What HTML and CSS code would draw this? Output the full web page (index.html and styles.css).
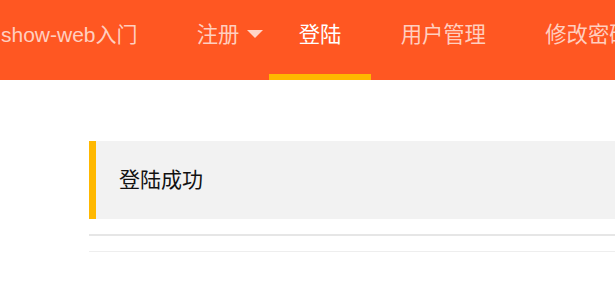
FILE: index.html
```html
<!DOCTYPE html>
<html lang="zh">
<head>
<meta charset="utf-8">
<title>show-web入门</title>
<link rel="stylesheet" href="styles.css">
</head>
<body>
<div class="header">
  <div class="logo">show-web入门</div>
  <ul class="nav">
    <li class="nav-item has-more">注册<span class="more"></span></li>
    <li class="nav-item active">登陆</li>
    <li class="nav-item">用户管理</li>
    <li class="nav-item">修改密码</li>
  </ul>
</div>
<div class="content">
  <div class="quote">登陆成功</div>
  <hr class="line-thick">
  <hr class="line-thin">
</div>
</body>
</html>
```
FILE: styles.css
```css
html, body {
  margin: 0;
  padding: 0;
  background: #fff;
  overflow: hidden;
}
body {
  font-family: "Liberation Sans", "Noto Sans CJK SC", sans-serif;
  font-size: 21.33px;
}
.header {
  display: flex;
  height: 80px;
  background: #FF5722;
  color: rgba(255, 255, 255, 0.72);
  white-space: nowrap;
}
.logo {
  width: 167px;
  padding-left: 1px;
  box-sizing: border-box;
  line-height: 70px;
  font-size: 21px;
  flex: none;
}
.nav {
  display: flex;
  margin: 0;
  padding: 0;
  list-style: none;
}
.nav-item {
  position: relative;
  height: 80px;
  box-sizing: border-box;
  padding: 0 29.67px;
  line-height: 70px;
  flex: none;
}
.nav-item.active {
  color: #fff;
  border-bottom: 6px solid #FFB800;
}
.more {
  position: absolute;
  right: 6px;
  top: 30px;
  width: 0;
  height: 0;
  border-left: 8px solid transparent;
  border-right: 8px solid transparent;
  border-top: 8px solid rgba(255, 255, 255, 0.75);
}
.content {
  padding: 61px 0 0 89px;
}
.quote {
  height: 78px;
  box-sizing: border-box;
  border-left: 7px solid #FFB800;
  background: #f2f2f2;
  padding-left: 23px;
  line-height: 78px;
  color: #111;
  font-size: 21px;
}
.line-thick {
  margin: 15px 0 0;
  border: 0;
  height: 2px;
  background: #e6e6e6;
}
.line-thin {
  margin: 15px 0 0;
  border: 0;
  height: 1px;
  background: #eeeeee;
}
```
